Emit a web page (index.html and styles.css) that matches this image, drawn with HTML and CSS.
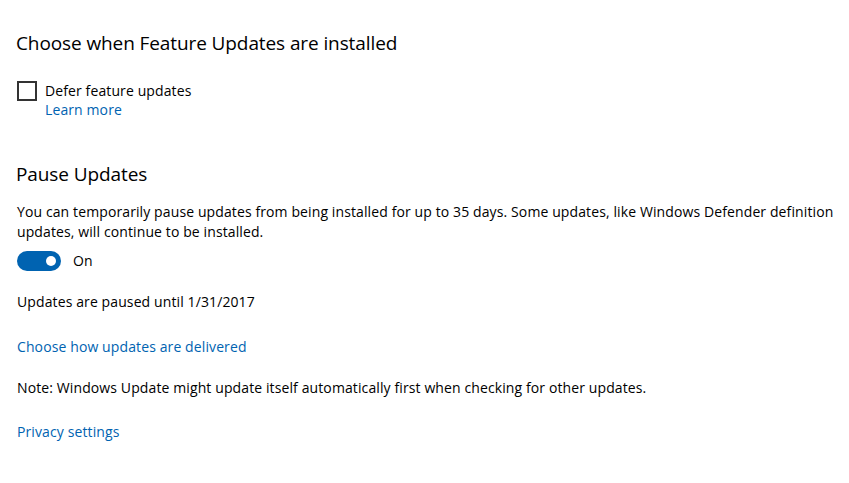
FILE: index.html
```html
<!DOCTYPE html>
<html>
<head>
<meta charset="utf-8">
<link rel="stylesheet" href="styles.css">
</head>
<body>
<main class="page">
  <h2 class="title first">Choose when Feature Updates are installed</h2>
  <div class="check-row">
    <span class="checkbox"></span>
    <div class="check-text">
      <div class="label">Defer feature updates</div>
      <a class="link" href="#">Learn more</a>
    </div>
  </div>

  <h2 class="title second">Pause Updates</h2>
  <p class="text desc">You can temporarily pause updates from being installed for up to 35 days. Some updates, like Windows Defender definition updates, will continue to be installed.</p>
  <div class="toggle-row">
    <span class="toggle"><span class="knob"></span></span>
    <span class="text">On</span>
  </div>
  <p class="text paused">Updates are paused until 1/31/2017</p>
  <a class="link block delivered" href="#">Choose how updates are delivered</a>
  <p class="text note">Note: Windows Update might update itself automatically first when checking for other updates.</p>
  <a class="link block privacy" href="#">Privacy settings</a>
</main>
</body>
</html>
```

FILE: styles.css
```css
html, body {
  margin: 0;
  padding: 0;
  background: #ffffff;
}
body {
  font-family: "Open Sans", "Noto Sans", sans-serif;
  color: #000000;
  font-size: 14px;
  line-height: 20px;
  letter-spacing: 0.11px;
}
.page {
  padding: 0 0 0 17px;
  display: flex;
  flex-direction: column;
  align-items: flex-start;
}
.title {
  font-weight: 400;
  font-size: 19px;
  line-height: 28px;
  margin: 0;
  color: #000;
  letter-spacing: -0.1px;
}
.title.first {
  margin-top: 29px;
  margin-left: -1px;
}
.title.second {
  margin-top: 40px;
  margin-left: -1px;
}
.check-row {
  display: flex;
  gap: 8px;
  margin-top: 24px;
  align-items: flex-start;
}
.checkbox {
  width: 16px;
  height: 16px;
  border: 2px solid #333333;
  margin-top: 0;
}
.check-text {
  display: flex;
  flex-direction: column;
}
.label {
  line-height: 19px;
}
.link {
  color: #0063b1;
  text-decoration: none;
}
.block {
  display: block;
}
.text {
  margin: 0;
}
.desc {
  margin-top: 14px;
  max-width: 825px;
}
.toggle-row {
  display: flex;
  align-items: center;
  gap: 12px;
  margin-top: 9px;
}
.toggle {
  width: 44px;
  height: 20px;
  border-radius: 10px;
  background: #0063b1;
  display: flex;
  align-items: center;
  justify-content: flex-end;
  padding-right: 5px;
  box-sizing: border-box;
}
.knob {
  width: 10px;
  height: 10px;
  border-radius: 50%;
  background: #ffffff;
}
.paused {
  margin-top: 21px;
}
.delivered {
  margin-top: 25px;
}
.note {
  margin-top: 21px;
}
.privacy {
  margin-top: 24px;
}
```
